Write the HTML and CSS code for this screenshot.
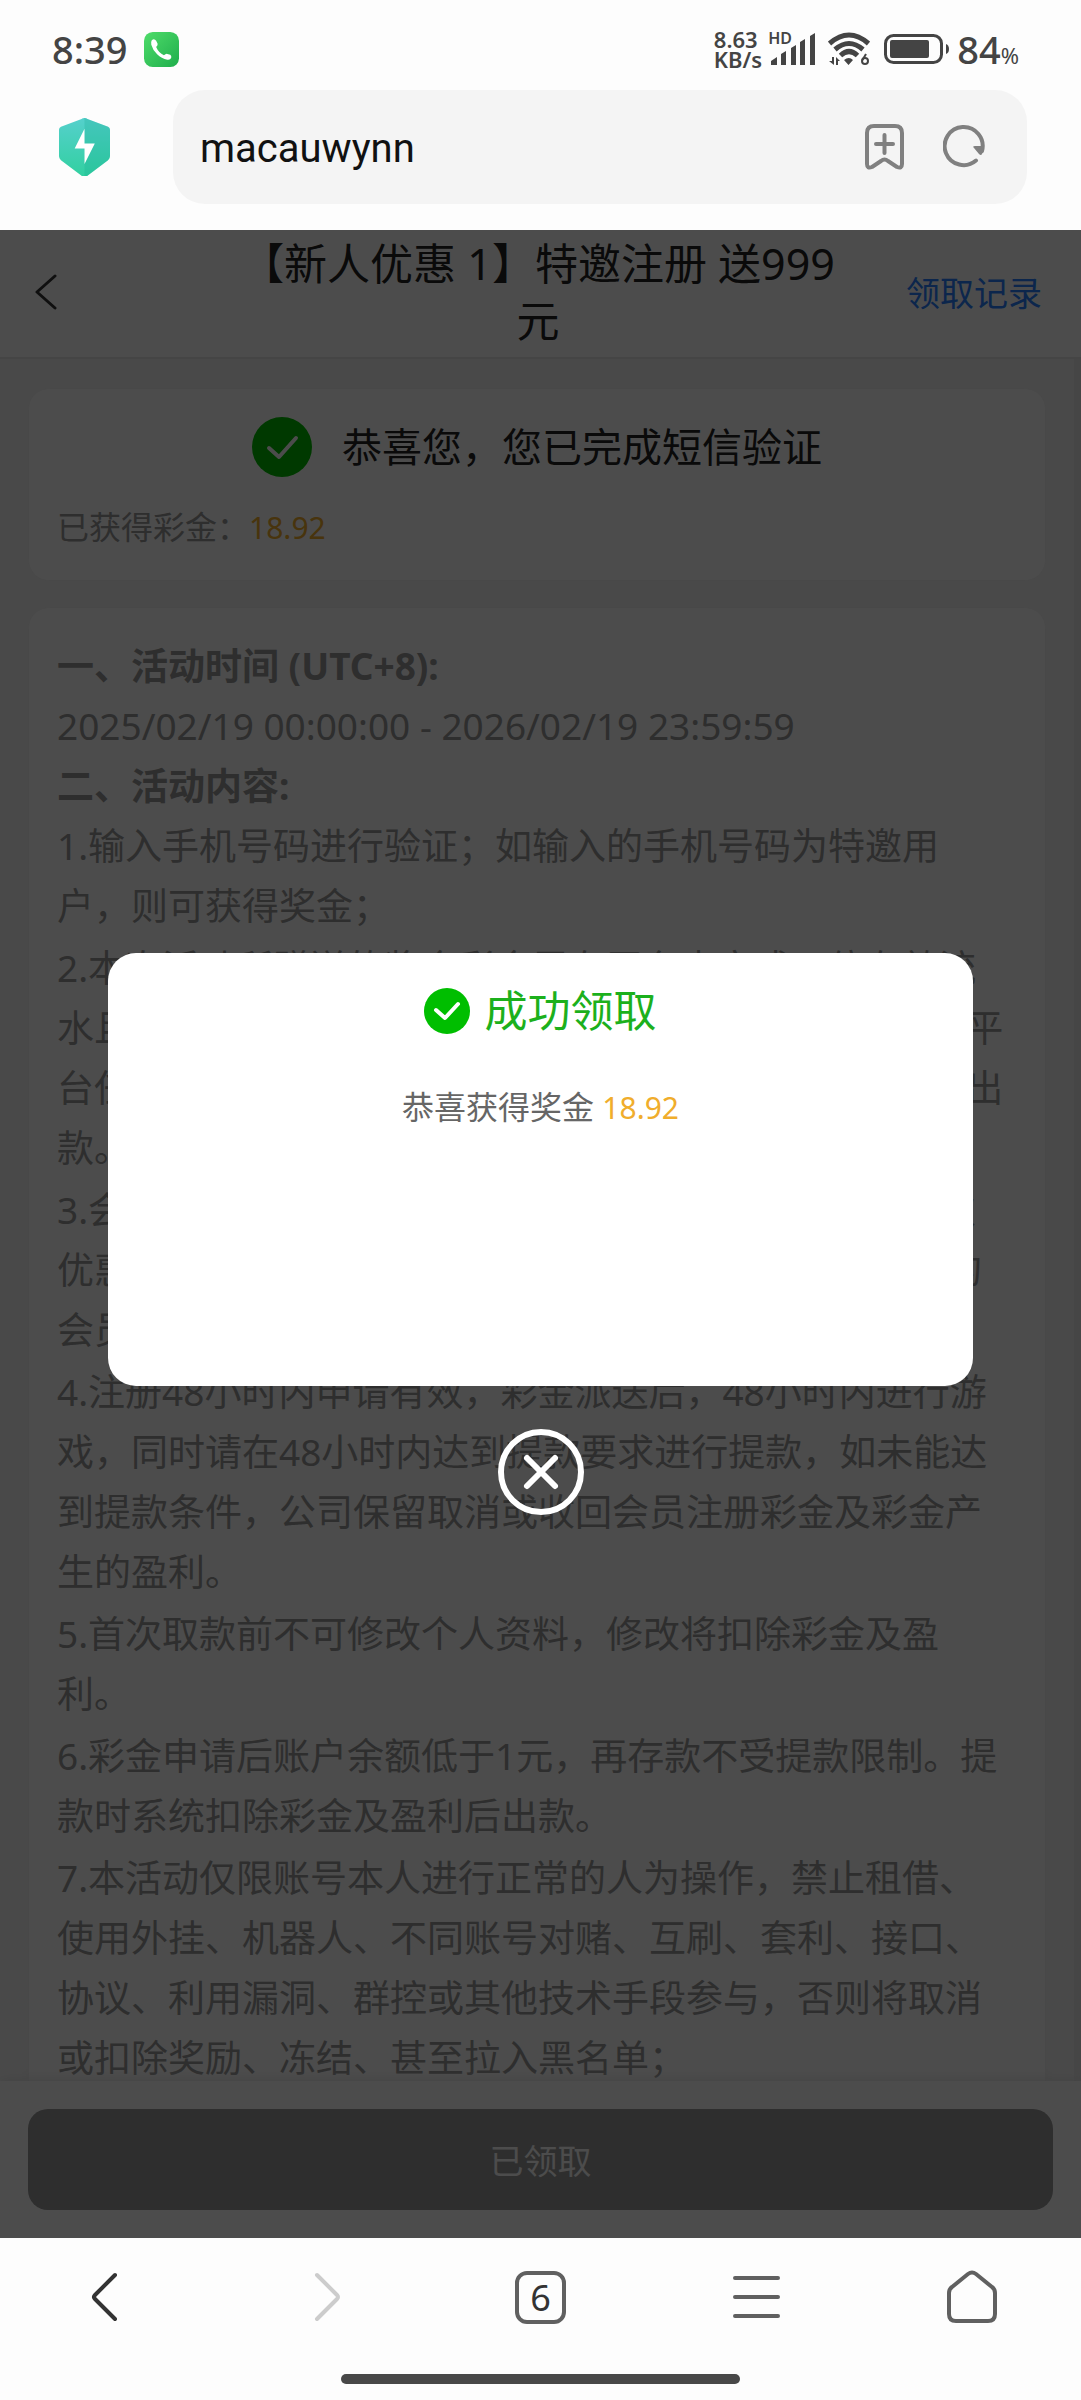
FILE: index.html
```html
<!DOCTYPE html>
<html lang="zh-CN">

  <head>
    <meta charset="utf-8">
    <meta name="viewport" content="width=device-width, initial-scale=1">
    <title>macauwynn</title>
    <link rel="stylesheet" href="styles.css">
  </head>

  <body>

    <div class="status">
      <span class="clock">8:39</span>
      <svg class="call" viewBox="0 0 36 36">
        <defs>
          <linearGradient id="callbg" x1="0" y1="0" x2="1" y2="1">
            <stop offset="0" stop-color="#4fdc6a"/>
            <stop offset="1" stop-color="#1fae4c"/>
          </linearGradient>
        </defs>
        <rect width="36" height="36" rx="9" fill="url(#callbg)"/>
        <path d="M8 8.500q2.500-2.500 4.500.5l1.500 3q.5 1.500-1.500 3.500 2.500 6 8 8.500 2-2 3.500-1.500l3 1q1.500 1 1 3-1 2.500-4 2-6-1-10.500-5.500T7.500 13q-.5-3 .5-4.500z" fill="#fff"/>
      </svg>

      <div class="indicators">
        <span class="speed">8.63<br>KB/s</span>
        <span class="signal">
          <span class="hd">HD</span>
          <svg width="48" height="34" viewBox="0 0 48 34" fill="#444">
            <path d="M3 33v-4l6-4v8zM13 33V22l5-3v14zM23 33V16l5-3v20zM32 33V10l5-3v26zM42 33V4l5-3v32z"/>
          </svg>
        </span>
        <svg class="wifi" width="42" height="34" viewBox="0 0 42 34">
          <g fill="none" stroke="#444" stroke-width="5">
            <path d="M1.500 11.500q19.500-17 39 0"/>
            <path d="M7 17.500q14-12 28 0"/>
            <path d="M12.500 23.500q8.500-8 17 0"/>
          </g>
          <path d="M16 28q5-4 9 0l-4.500 5zM4 25h2v8L1 29h3zM8 33v-8l4 4h-2v4z" fill="#444"/>
          <circle cx="37" cy="29" r="3" fill="none" stroke="#444" stroke-width="2"/>
          <path d="M34.500 28l3.500-6" stroke="#444" stroke-width="2"/>
        </svg>
        <svg class="battery" width="65" height="30" viewBox="0 0 65 30">
          <rect x="1.500" y="1.500" width="56" height="27" rx="8" fill="none" stroke="#444" stroke-width="3"/>
          <rect x="6" y="6" width="39" height="18" rx="2" fill="#444"/>
          <path d="M62 10q3 1 3 5t-3 5z" fill="#444"/>
        </svg>
        <span class="percent">84<small>%</small></span>
      </div>
    </div>

    <div class="address">
      <svg class="shield" viewBox="0 0 52 60">
        <defs>
          <linearGradient id="shieldbg" x1="0" y1="0" x2="0" y2="1">
            <stop offset="0" stop-color="#55d0cc"/>
            <stop offset="1" stop-color="#31d0a0"/>
          </linearGradient>
        </defs>
        <path d="M26 0q2 0 3 1l21 8q2 1 2 3v27q0 2-2 4L29 59q-3 2-6 0L2 43q-2-2-2-4V12q0-2 2-3l21-8q1-1 3-1z" fill="url(#shieldbg)"/>
        <path d="M26 0q2 0 3 1l21 8q2 1 2 3v27q0 2-2 4L29 59q-1 1-3 1z" fill="#14a890" opacity=".25"/>
        <path d="M26 11L16 31h10v16l10.500-21H26z" fill="#fff"/>
      </svg>
      <div class="urlbar">
        <input class="url" type="text" value="macauwynn" aria-label="网址">
        <button class="icon" aria-label="收藏">
          <svg width="42" height="48" viewBox="0 0 42 48" fill="none" stroke="#808080" stroke-width="4" stroke-linecap="round" stroke-linejoin="round">
            <path d="M3 10q0-7 7-7h21q7 0 7 7v31q0 5-5 3l-9-6q-3.500-3-7 0l-9 6q-5 2-5-3zM20.500 12v18M12 21h17"/>
          </svg>
        </button>
        <button class="icon" aria-label="刷新">
          <svg width="42" height="44" viewBox="0 0 42 44">
            <path d="M33 35.500A19 19 0 1 1 39 26" fill="none" stroke="#808080" stroke-width="4" stroke-linecap="round"/>
            <path d="M31 23q-2-2 1-2h9q0 5-2 8-1 2-3 0z" fill="#808080"/>
          </svg>
        </button>
      </div>
    </div>

    <div class="page">

      <header class="topbar">
        <button class="back" aria-label="返回">
          <svg width="24" height="36" viewBox="0 0 24 36" fill="none" stroke="#333" stroke-width="3" stroke-linecap="round" stroke-linejoin="round">
            <path d="M21 2L3 18l18 16"/>
          </svg>
        </button>
        <h1 class="title">【新人优惠 1】特邀注册 送999<br>元</h1>
        <a class="records" href="#">领取记录</a>
      </header>

      <main class="content">
        <section class="card">
          <div class="verified">
            <svg width="60" height="60" viewBox="0 0 60 60">
              <circle cx="30" cy="30" r="30" fill="#00be00"/>
              <path d="M17 31l10 9 17-19" fill="none" stroke="#fff" stroke-width="4" stroke-linecap="round" stroke-linejoin="round"/>
            </svg>
            <span>恭喜您，您已完成短信验证</span>
          </div>
          <p class="bonus">已获得彩金：<span class="money">18.92</span></p>
        </section>

        <section class="card rules">
          <h2>一、活动时间 (UTC+8):</h2>
          <div>2025/02/19 00:00:00 - 2026/02/19 23:59:59</div>
          <h2>二、活动内容:</h2>
          <p>1.输入手机号码进行验证；如输入的手机号码为特邀用<br>户，则可获得奖金；</p>
          <p>2.本次活动所赠送的奖金彩金需在平台内完成一倍有效流<br>水且余额满足条件后方可申请出款1次，所有游戏均计算平<br>台任意场馆流水，未完成1倍流水要求的会员将无法申请出<br>款。</p>
          <p>3.会员的每个账号每个手机号码每个设备仅可以领取一次<br>优惠，如发现同一会员重复注册领取优惠，经判定相关的<br>会员将被取消资格。</p>
          <p>4.注册48小时内申请有效，彩金派送后，48小时内进行游<br>戏，同时请在48小时内达到提款要求进行提款，如未能达<br>到提款条件，公司保留取消或收回会员注册彩金及彩金产<br>生的盈利。</p>
          <p>5.首次取款前不可修改个人资料，修改将扣除彩金及盈<br>利。</p>
          <p>6.彩金申请后账户余额低于1元，再存款不受提款限制。提<br>款时系统扣除彩金及盈利后出款。</p>
          <p>7.本活动仅限账号本人进行正常的人为操作，禁止租借、<br>使用外挂、机器人、不同账号对赌、互刷、套利、接口、<br>协议、利用漏洞、群控或其他技术手段参与，否则将取消<br>或扣除奖励、冻结、甚至拉入黑名单；</p>
        </section>
      </main>

      <footer class="actions">
        <button class="claim" disabled>已领取</button>
      </footer>

      <div class="mask">
        <div class="dialog" role="dialog" aria-labelledby="dialogtitle">
          <div class="dialog-title">
            <svg width="46" height="46" viewBox="0 0 46 46">
              <circle cx="23" cy="23" r="23" fill="#00be00"/>
              <path d="M12 22l9 8 13-14" fill="none" stroke="#fff" stroke-width="4" stroke-linecap="round" stroke-linejoin="round"/>
            </svg>
            <span id="dialogtitle">成功领取</span>
          </div>
          <p class="dialog-text">恭喜获得奖金 <span class="money">18.92</span></p>
        </div>
        <button class="close" aria-label="关闭">
          <svg width="86" height="86" viewBox="0 0 86 86" fill="none" stroke="#fff" stroke-width="6" stroke-linecap="round">
            <circle cx="43" cy="43" r="40"/>
            <path d="M29 29l28 28M57 29L29 57"/>
          </svg>
        </button>
      </div>

    </div>

    <nav class="toolbar">
      <button aria-label="后退">
        <svg width="52" height="54" viewBox="0 0 52 54" fill="none" stroke="#333" stroke-width="4" stroke-linecap="round" stroke-linejoin="round">
          <path d="M33 5L13 25q-2 2 0 4l20 20"/>
        </svg>
      </button>
      <button aria-label="前进">
        <svg width="52" height="54" viewBox="0 0 52 54" fill="none" stroke="#ccc" stroke-width="4" stroke-linecap="round" stroke-linejoin="round">
          <path d="M19 5l20 20q2 2 0 4L19 49"/>
        </svg>
      </button>
      <button aria-label="标签页"><span class="tabs">6</span></button>
      <button aria-label="菜单">
        <svg width="52" height="54" viewBox="0 0 52 54" fill="none" stroke="#606060" stroke-width="4" stroke-linecap="round">
          <path d="M4 8h43M4 27h43M4 46h43"/>
        </svg>
      </button>
      <button aria-label="主页">
        <svg width="52" height="54" viewBox="0 0 52 54" fill="none" stroke="#606060" stroke-width="4" stroke-linejoin="round">
          <path d="M2 23q0-4 3-6L21 4q4-3 8 0l16 13q3 2 3 6v21q0 7-7 7H9q-7 0-7-7z"/>
        </svg>
      </button>
    </nav>

    <div class="gesture"><span></span></div>

  </body>

</html>
```

FILE: styles.css
```css
* {box-sizing: border-box;}

body {
  margin: 0;
  height: 100vh;
  display: flex;
  flex-direction: column;
  background-color: #fdfdfd;
  font-family: "Noto Sans", "Noto Sans CJK SC", sans-serif;
  color: #222;
}

h1, h2, p {margin: 0;}

svg {display: block; flex: none;}

button {
  border: none;
  background: none;
  padding: 0;
  font-family: inherit;
  cursor: pointer;
}

/* phone status bar */

.status {
  height: 90px;
  padding: 8px 62px 0 52px;
  display: flex;
  align-items: center;
  color: #444;
}

.clock {
  font-size: 38px;
  font-weight: 500;
}

.call {
  width: 35px;
  margin-left: 16px;
}

.indicators {
  margin-left: auto;
  display: flex;
  align-items: center;
}

.speed {
  font-size: 22px;
  line-height: 20px;
  font-weight: 600;
}

.signal {
  position: relative;
  margin-left: 6px;
}

.hd {
  position: absolute;
  left: 0;
  top: 0;
  font-size: 16px;
  line-height: 12px;
  font-weight: 600;
}

.wifi {margin-left: 12px;}
.battery {margin-left: 14px;}

.percent {
  margin-left: 8px;
  font-size: 38px;
  font-weight: 500;
}

.percent small {
  font-size: 22px;
  font-weight: 400;
}

/* address bar */

.address {
  display: flex;
  align-items: center;
  padding: 0 54px 26px 59px;
}

.shield {width: 51px;}

.urlbar {
  flex: 1;
  height: 114px;
  margin-left: 63px;
  padding: 0 42px 0 27px;
  display: flex;
  align-items: center;
  background-color: #f4f4f4;
  border-radius: 32px;
}

.url {
  flex: 1;
  min-width: 0;
  padding: 2px 0 0;
  border: none;
  outline: none;
  background: none;
  font-family: Roboto, sans-serif;
  font-size: 40px;
  color: #111;
}

.icon {margin-left: 37px;}

/* web page */

.page {
  position: relative;
  flex: 1;
  min-height: 0;
  display: flex;
  flex-direction: column;
  overflow: hidden;
  background-color: #f6f6f6;
}

.topbar {
  display: flex;
  align-items: center;
  min-height: 129px;
  padding: 0 39px 4px 34px;
  background-color: #fff;
  border-bottom: 2px solid #e6e6e6;
}

.back, .records {width: 140px;}

.title {
  flex: 1;
  font-size: 43px;
  line-height: 57px;
  font-weight: 400;
  text-align: center;
  white-space: nowrap;
}

.records {
  font-size: 34px;
  text-align: right;
  text-decoration: none;
  color: #2b80ff;
}

.content {
  flex: 1;
  min-height: 0;
  padding: 30px 29px 0;
  overflow: hidden;
  border-right: 7px solid #ebebeb;
}

.card {
  padding: 28px;
  margin-bottom: 28px;
  background-color: #fff;
  border-radius: 20px;
  box-shadow: 0 0 10px #eee;
}

.verified {
  display: flex;
  justify-content: center;
  align-items: center;
  gap: 30px;
  font-size: 40px;
  line-height: 60px;
}

.bonus {
  margin-top: 26px;
  font-size: 32px;
  line-height: 48px;
  color: #999;
}

.money {
  font-size: 30px;
  color: #f0ad2c;
}

.rules {
  font-size: 37px;
  line-height: 60px;
  color: #999;
  white-space: nowrap;
}

.rules h2 {
  font-size: 37px;
  font-weight: 700;
}

.rules p {margin-bottom: 2px;}

.actions {
  padding: 28px;
  background-color: #fff;
  box-shadow: 0 0 12px #ddd;
}

.claim {
  width: 100%;
  height: 101px;
  border-radius: 20px;
  background-color: #999;
  color: #fff;
  font-size: 34px;
}

/* popup */

.mask {
  position: absolute;
  inset: 0;
  display: flex;
  flex-direction: column;
  align-items: center;
  justify-content: center;
  gap: 43px;
  background-color: rgba(0,0,0,0.7);
}

.dialog {
  width: 80%;
  min-height: 40vw;
  padding: 28px;
  background-color: #fff;
  border-radius: 28px;
  text-align: center;
}

.dialog-title {
  display: flex;
  justify-content: center;
  align-items: center;
  gap: 14px;
  font-size: 43px;
  line-height: 60px;
  color: #1cb01c;
}

.dialog-text {
  margin-top: 42px;
  font-size: 32px;
  line-height: 48px;
  color: #666;
}

/* browser toolbar */

.toolbar {
  display: grid;
  grid-template-columns: repeat(5, 1fr);
  height: 118px;
}

.toolbar button {
  display: flex;
  align-items: center;
  justify-content: center;
}

.tabs {
  width: 51px;
  height: 53px;
  border: 4px solid #606060;
  border-radius: 12px;
  font-size: 36px;
  line-height: 45px;
  color: #333;
}

.gesture {
  height: 44px;
  padding-top: 18px;
}

.gesture span {
  display: block;
  width: 37%;
  height: 10px;
  margin: 0 auto;
  border-radius: 5px;
  background-color: #484848;
}
```
